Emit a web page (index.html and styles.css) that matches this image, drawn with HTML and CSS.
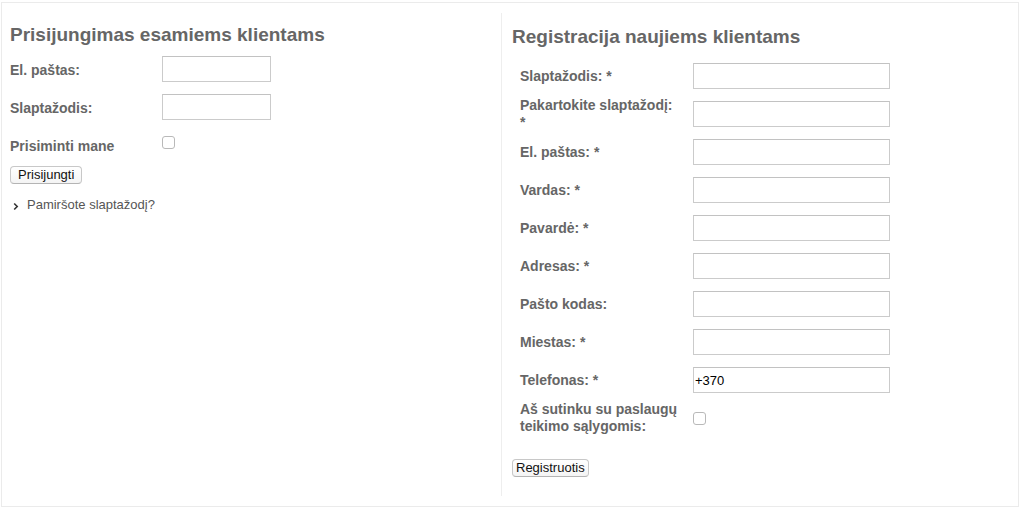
FILE: index.html
```html
<!DOCTYPE html>
<html lang="lt">
<head>
    <meta charset="UTF-8">
    <title>Prisijungimas</title>
    <link rel="stylesheet" href="styles.css">
</head>
<body>
    <div class="account-box">
        <!-- prisijungimas -->
        <div class="col col-login">
            <h2 class="col-title">Prisijungimas esamiems klientams</h2>
            <form class="login-form">
                <div class="login-row">
                    <label class="login-label">El. paštas:</label>
                    <input type="text" class="field field-short">
                </div>
                <div class="login-row">
                    <label class="login-label">Slaptažodis:</label>
                    <input type="password" class="field field-short">
                </div>
                <div class="login-row">
                    <label class="login-label">Prisiminti mane</label>
                    <input type="checkbox" class="check check-login">
                </div>
                <button type="button" class="btn">Prisijungti</button>
                <a href="#" class="forgot">
                    <svg class="forgot-arrow" width="6" height="9" viewBox="0 0 6 9"><polyline points="1.2,1.5 4.2,4.5 1.2,7.5" fill="none" stroke="#333" stroke-width="1.6"/></svg>
                    Pamiršote slaptažodį?
                </a>
            </form>
        </div>

        <!-- registracija -->
        <div class="col col-register">
            <h2 class="col-title col-title-reg">Registracija naujiems klientams</h2>
            <form>
                <table class="reg-table">
                    <tr>
                        <td class="reg-label">Slaptažodis: *</td>
                        <td class="reg-input"><input type="password" class="field field-long"></td>
                    </tr>
                    <tr>
                        <td class="reg-label">Pakartokite slaptažodį: *</td>
                        <td class="reg-input"><input type="password" class="field field-long"></td>
                    </tr>
                    <tr>
                        <td class="reg-label">El. paštas: *</td>
                        <td class="reg-input"><input type="text" class="field field-long"></td>
                    </tr>
                    <tr>
                        <td class="reg-label">Vardas: *</td>
                        <td class="reg-input"><input type="text" class="field field-long"></td>
                    </tr>
                    <tr>
                        <td class="reg-label">Pavardė: *</td>
                        <td class="reg-input"><input type="text" class="field field-long"></td>
                    </tr>
                    <tr>
                        <td class="reg-label">Adresas: *</td>
                        <td class="reg-input"><input type="text" class="field field-long"></td>
                    </tr>
                    <tr>
                        <td class="reg-label">Pašto kodas:</td>
                        <td class="reg-input"><input type="text" class="field field-long"></td>
                    </tr>
                    <tr>
                        <td class="reg-label">Miestas: *</td>
                        <td class="reg-input"><input type="text" class="field field-long"></td>
                    </tr>
                    <tr>
                        <td class="reg-label">Telefonas: *</td>
                        <td class="reg-input"><input type="text" class="field field-long" value="+370"></td>
                    </tr>
                    <tr>
                        <td class="reg-label"><span class="nowrap">Aš sutinku su paslaugų</span> teikimo sąlygomis:</td>
                        <td class="reg-input"><input type="checkbox" class="check"></td>
                    </tr>
                </table>
                <button type="button" class="btn btn-reg">Registruotis</button>
            </form>
        </div>
    </div>
</body>
</html>
```

FILE: styles.css
```css
* {
    margin: 0;
    padding: 0;
    box-sizing: border-box;
}

body {
    font-family: "Liberation Sans", Arial, Helvetica, sans-serif;
    font-size: 13px;
    background: #fff;
    color: #666;
}

.account-box {
    display: flex;
    width: 1018px;
    height: 505px;
    margin: 2px 0 0 1px;
    padding: 10px 8px;
    border: 1px solid #ebebeb;
}

.col-login {
    width: 491px;
}

.col-register {
    flex: 1;
    border-left: 1px solid #eee;
    padding-left: 10px;
}

.col-title {
    font-size: 19px;
    line-height: 22px;
    font-weight: bold;
    color: #666;
    margin: 11px 0 10px 0;
}

.col-title-reg {
    margin: 13px 0 9px 0;
}

.login-row {
    display: flex;
    align-items: flex-start;
    margin-bottom: 12px;
}

.login-label {
    width: 152px;
    padding-top: 6px;
    font-size: 14px;
    line-height: 16px;
    font-weight: bold;
}

.field {
    height: 26px;
    border: 1px solid #cbcbcb;
    border-top-color: #c2c2c2;
    background: #fff;
    padding: 0 1px;
    font-family: inherit;
    font-size: 13px;
    color: #000;
    outline: none;
}

.field-short {
    width: 109px;
}

.field-long {
    width: 197px;
}

.check {
    -webkit-appearance: none;
    appearance: none;
    width: 13px;
    height: 13px;
    border: 1px solid #b9b9b9;
    border-radius: 3px;
    background: #fff;
    display: block;
}

.check-login {
    margin-top: 4px;
}

.btn {
    display: block;
    height: 18px;
    padding: 0 7px;
    border: 1px solid #c8c8c8;
    border-bottom-color: #b4b4b4;
    border-radius: 4px;
    background: linear-gradient(#fff, #f4f4f4);
    font-family: inherit;
    font-size: 13px;
    line-height: 16px;
    color: #111;
}

.forgot {
    display: flex;
    align-items: center;
    margin-top: 13px;
    padding-left: 3px;
    line-height: 16px;
    color: #555;
    text-decoration: none;
}

.forgot-arrow {
    margin-right: 8px;
    margin-top: 2px;
}

.reg-table {
    border-collapse: collapse;
}

.reg-label {
    width: 181px;
    padding: 2px 12px 2px 8px;
    font-size: 14px;
    line-height: 17px;
    font-weight: bold;
    vertical-align: middle;
}

.nowrap {
    white-space: nowrap;
}

.reg-input {
    padding: 6px 0;
    vertical-align: middle;
}

.btn-reg {
    margin-top: 22px;
    padding: 0 3px;
}
```
